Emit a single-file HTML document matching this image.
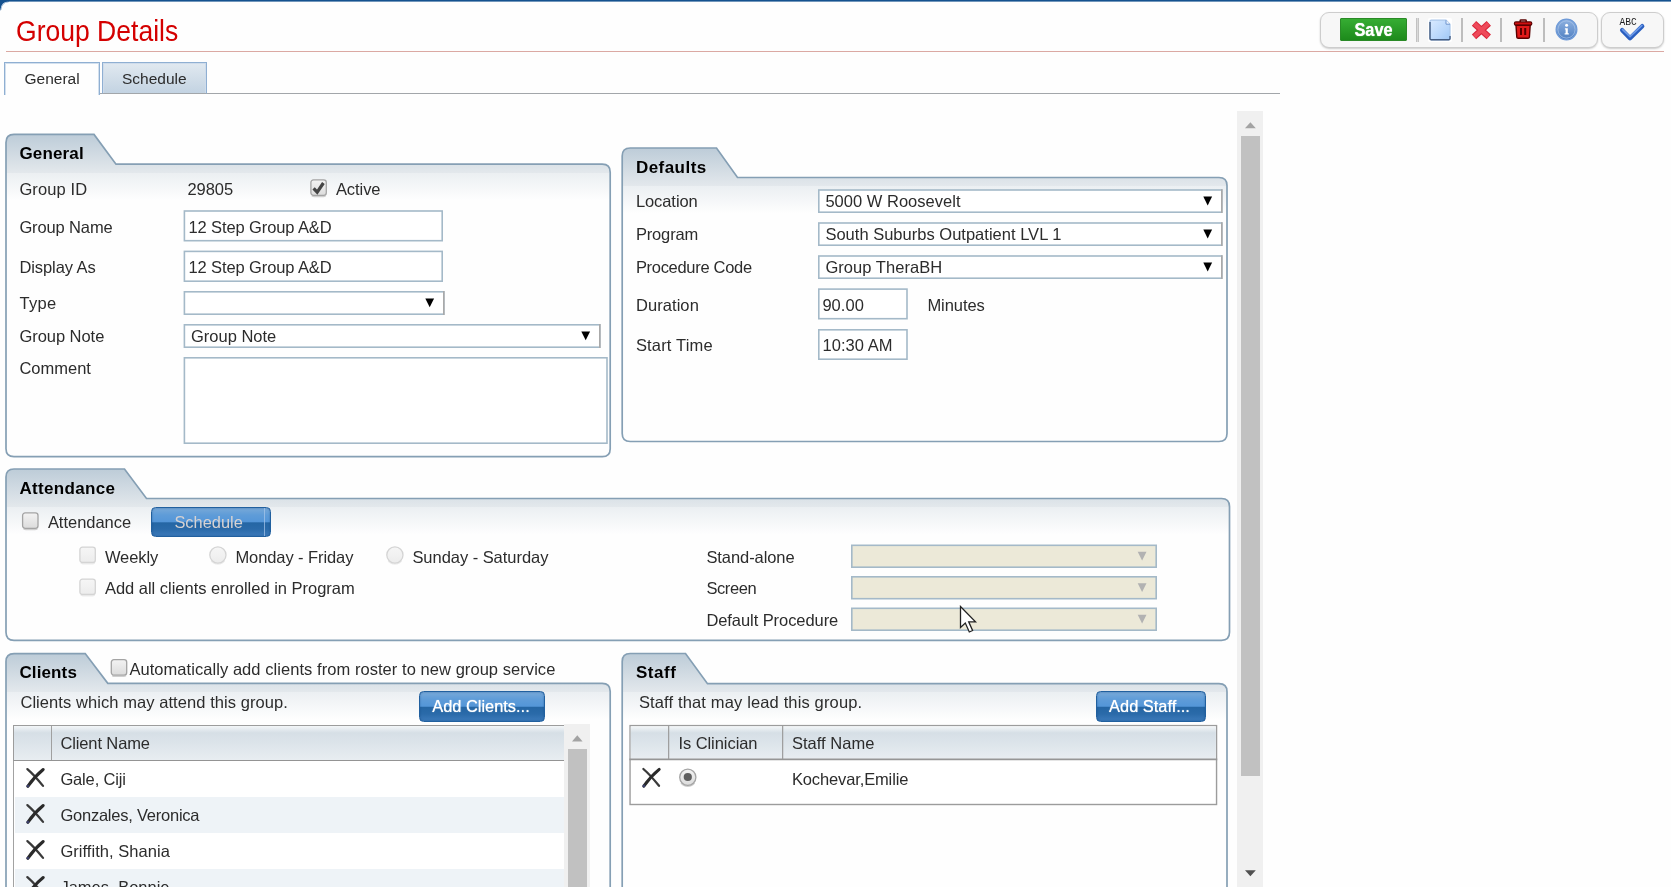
<!DOCTYPE html><html lang="en"><head><meta charset="utf-8"><title>Group Details</title><style>
*{box-sizing:border-box;margin:0;padding:0}
html,body{width:1671px;height:887px;overflow:hidden;background:#fefefe}
#root{position:absolute;left:0;top:0;width:1671px;height:887px;overflow:hidden;will-change:transform}
body{font-family:"Liberation Sans",sans-serif;font-size:16.5px;color:#2c2c2c;position:relative}
.abs{position:absolute}
.t{position:absolute;white-space:nowrap;line-height:20px;height:20px}
.b{font-weight:bold;font-size:17px;color:#000}
.inp{position:absolute;background:#fff;border:2px solid #a9bccb;border-top-color:#9fb3c3;}
.sel{position:absolute;background:#fff;border:2px solid #a9bccb}
.arr{position:absolute;width:0;height:0;border-left:5px solid transparent;border-right:5px solid transparent;border-top:9px solid #111}
.dis{background:#ece9d8}
.cb{position:absolute;width:18px;height:18px;border:1px solid #a5a5a5;border-radius:3px;background:linear-gradient(#f6f6f6,#dedede);box-shadow:0 1px 1px rgba(0,0,0,.15)}
.rb{position:absolute;width:18px;height:18px;border:1px solid #a5a5a5;border-radius:50%;background:linear-gradient(#f6f6f6,#dedede);box-shadow:0 1px 1px rgba(0,0,0,.15)}
.btn{position:absolute;border-radius:4.5px;border:1.3px solid #21609f;background:linear-gradient(#78a9d8 0%,#5f9cd8 25%,#5496d8 49%,#2566a4 53%,#2a6aa9 75%,#3c7aba 100%);color:#fff;text-align:center;font-size:16.4px;box-shadow:inset 0 0 2px rgba(20,70,130,.6)}
</style></head><body><div id="root">
<svg class="abs" style="left:0;top:0" width="1671" height="12" viewBox="0 0 1671 12"><rect x="0" y="0" width="1671" height="1.6" fill="#15528f"/><path d="M0 0 H9 V1.6 Q1.2 1.8 0.6 9.5 L0 11 Z" fill="#15528f"/><path d="M8.5 1.9 Q1.6 2.2 0.9 10" fill="none" stroke="#7fa3c8" stroke-width="1" opacity=".7"/></svg>
<div class="t" style="left:16.2px;top:14px;font-size:28.6px;transform:scaleX(0.928);transform-origin:0 0;line-height:34px;height:34px;color:#d40000">Group Details</div>
<div class="abs" style="left:6px;top:51px;width:1658px;height:1px;background:#dba9a3"></div>
<div class="abs" style="left:100px;top:93px;width:1180px;height:1px;background:#a2a6aa"></div>
<div class="abs" style="left:4px;top:61.5px;width:96.4px;height:33px;border:1.4px solid #8fafd2;border-bottom:none;background:#fefefe;box-shadow:inset 1px 1px 0 #d3e0ee,inset -1px 0 0 #d3e0ee"></div>
<div class="t" style="left:24.5px;top:68.5px;font-size:15.5px">General</div>
<div class="abs" style="left:102px;top:61.5px;width:105px;height:32.5px;border:1.4px solid #8fafd2;border-bottom-color:#a2a6aa;background:linear-gradient(#e1e9f0,#c3d3e2);box-shadow:inset 1px 1px 0 #cfdceb,inset -1px 0 0 #cfdceb"></div>
<div class="t" style="left:122px;top:68.5px;font-size:15.5px">Schedule</div>
<svg class="abs" style="left:0;top:0" width="1290" height="887" viewBox="0 0 1290 887">
<defs><linearGradient id="ggen" gradientUnits="userSpaceOnUse" x1="0" y1="134.4" x2="0" y2="200.2">
<stop offset="0" stop-color="#bdccd8"/><stop offset="0.581" stop-color="#e3e8ec"/><stop offset="0.581" stop-color="#ebeff2"/><stop offset="1" stop-color="#fefefe"/></linearGradient></defs>
<path d="M6,448.7 L6,142.4 Q6,134.4 14,134.4 L94,134.4 L116,164.2 L602.2,164.2 Q610.2,164.2 610.2,172.2 L610.2,448.7 Q610.2,456.7 602.2,456.7 L14,456.7 Q6,456.7 6,448.7 Z" fill="url(#ggen)" stroke="#859fb4" stroke-width="1.7"/></svg>
<svg class="abs" style="left:0;top:0" width="1290" height="887" viewBox="0 0 1290 887">
<defs><linearGradient id="gdef" gradientUnits="userSpaceOnUse" x1="0" y1="148" x2="0" y2="213.5">
<stop offset="0" stop-color="#bdccd8"/><stop offset="0.579" stop-color="#e3e8ec"/><stop offset="0.579" stop-color="#ebeff2"/><stop offset="1" stop-color="#fefefe"/></linearGradient></defs>
<path d="M622.2,433.5 L622.2,156 Q622.2,148 630.2,148 L716.5,148 L737.5,177.5 L1219,177.5 Q1227,177.5 1227,185.5 L1227,433.5 Q1227,441.5 1219,441.5 L630.2,441.5 Q622.2,441.5 622.2,433.5 Z" fill="url(#gdef)" stroke="#859fb4" stroke-width="1.7"/></svg>
<svg class="abs" style="left:0;top:0" width="1290" height="887" viewBox="0 0 1290 887">
<defs><linearGradient id="gatt" gradientUnits="userSpaceOnUse" x1="0" y1="469" x2="0" y2="534.5">
<stop offset="0" stop-color="#bdccd8"/><stop offset="0.579" stop-color="#e3e8ec"/><stop offset="0.579" stop-color="#ebeff2"/><stop offset="1" stop-color="#fefefe"/></linearGradient></defs>
<path d="M6,632.3 L6,477 Q6,469 14,469 L124.5,469 L146.5,498.5 L1221.5,498.5 Q1229.5,498.5 1229.5,506.5 L1229.5,632.3 Q1229.5,640.3 1221.5,640.3 L14,640.3 Q6,640.3 6,632.3 Z" fill="url(#gatt)" stroke="#859fb4" stroke-width="1.7"/></svg>
<svg class="abs" style="left:0;top:0" width="1290" height="887" viewBox="0 0 1290 887">
<defs><linearGradient id="gcli" gradientUnits="userSpaceOnUse" x1="0" y1="653.6" x2="0" y2="719.3">
<stop offset="0" stop-color="#bdccd8"/><stop offset="0.580" stop-color="#e3e8ec"/><stop offset="0.580" stop-color="#ebeff2"/><stop offset="1" stop-color="#fefefe"/></linearGradient></defs>
<path d="M6,892 L6,661.6 Q6,653.6 14,653.6 L85.2,653.6 L107.8,683.3 L602.2,683.3 Q610.2,683.3 610.2,691.3 L610.2,892 Q610.2,900 602.2,900 L14,900 Q6,900 6,892 Z" fill="url(#gcli)" stroke="#859fb4" stroke-width="1.7"/></svg>
<svg class="abs" style="left:0;top:0" width="1290" height="887" viewBox="0 0 1290 887">
<defs><linearGradient id="gstf" gradientUnits="userSpaceOnUse" x1="0" y1="653.5" x2="0" y2="719.7">
<stop offset="0" stop-color="#bdccd8"/><stop offset="0.583" stop-color="#e3e8ec"/><stop offset="0.583" stop-color="#ebeff2"/><stop offset="1" stop-color="#fefefe"/></linearGradient></defs>
<path d="M622.2,892 L622.2,661.5 Q622.2,653.5 630.2,653.5 L685.5,653.5 L707.5,683.7 L1219,683.7 Q1227,683.7 1227,691.7 L1227,892 Q1227,900 1219,900 L630.2,900 Q622.2,900 622.2,892 Z" fill="url(#gstf)" stroke="#859fb4" stroke-width="1.7"/></svg>
<svg width="0" height="0" style="position:absolute"><defs><linearGradient id="cbg" x1="0" y1="0" x2="0" y2="1"><stop offset="0" stop-color="#f3f3f3"/><stop offset="1" stop-color="#dcdcdc"/></linearGradient><linearGradient id="cbf" x1="0" y1="0" x2="0" y2="1"><stop offset="0" stop-color="#f6f6f6"/><stop offset="1" stop-color="#ececec"/></linearGradient></defs></svg>
<div class="t b" style="left:19.4px;top:144px;letter-spacing:0.155px;">General</div>
<div class="t " style="left:19.4px;top:179px;letter-spacing:0.106px;">Group ID</div>
<div class="t " style="left:187.4px;top:179px;letter-spacing:-0.018px;">29805</div>
<svg class="abs" style="left:310px;top:179px" width="20" height="21" viewBox="0 0 20 21"><g transform="translate(0.2,0.2)"><path d="M1.5 16.6 Q3 17.4 4 17.4 H13 Q14.5 17.4 15.5 16.6" fill="none" stroke="#cfcfcf" stroke-width="1.3"/><rect x="0.7" y="0.7" width="15.4" height="15.4" rx="2.6" fill="url(#cbg)" stroke="#a4a4a4" stroke-width="1.3"/><path d="M3.4 9.2 L7 13 L13.2 3.8" fill="none" stroke="#454545" stroke-width="3.2"/></g></svg>
<div class="t " style="left:335.9px;top:179px;letter-spacing:-0.056px;">Active</div>
<div class="t " style="left:19.4px;top:217px;letter-spacing:-0.127px;">Group Name</div>
<svg class="abs" style="left:183px;top:210px" width="261" height="33" viewBox="0 0 261 33"><g transform="translate(0.6,0.2)"><rect x="0.8" y="0.8" width="257.79999999999995" height="29.7" fill="#fff" stroke="#a4b9c8" stroke-width="1.6"/></g></svg>
<div class="t " style="left:188.4px;top:217px;letter-spacing:-0.102px;">12 Step Group A&amp;D</div>
<div class="t " style="left:19.4px;top:257px;letter-spacing:-0.083px;">Display As</div>
<svg class="abs" style="left:183px;top:250px" width="261" height="33" viewBox="0 0 261 33"><g transform="translate(0.6,0.6)"><rect x="0.8" y="0.8" width="257.79999999999995" height="29.799999999999997" fill="#fff" stroke="#a4b9c8" stroke-width="1.6"/></g></svg>
<div class="t " style="left:188.4px;top:257px;letter-spacing:-0.102px;">12 Step Group A&amp;D</div>
<div class="t " style="left:19.4px;top:293px;letter-spacing:0.330px;">Type</div>
<svg class="abs" style="left:183px;top:291px" width="263" height="25" viewBox="0 0 263 25"><g transform="translate(0.6,0)"><rect x="0.8" y="0.8" width="259.4" height="22.4" fill="#fff" stroke="#a4b9c8" stroke-width="1.6"/><line x1="260.2" y1="0" x2="260.2" y2="24" stroke="#a9a9a9" stroke-width="1.6"/></g></svg>
<svg class="abs" style="left:425px;top:298px" width="12" height="12" viewBox="0 0 12 12"><g transform="translate(0.3,0.1)"><path d="M0 0.3 H8.8 L4.4 9.2 Z" fill="#000"/></g></svg>
<div class="t " style="left:19.4px;top:326px;letter-spacing:-0.040px;">Group Note</div>
<svg class="abs" style="left:183px;top:324px" width="419" height="25" viewBox="0 0 419 25"><g transform="translate(0.6,0)"><rect x="0.8" y="0.8" width="415.4" height="22.4" fill="#fff" stroke="#a4b9c8" stroke-width="1.6"/><line x1="416.2" y1="0" x2="416.2" y2="24" stroke="#a9a9a9" stroke-width="1.6"/></g></svg>
<svg class="abs" style="left:581px;top:331px" width="12" height="12" viewBox="0 0 12 12"><g transform="translate(0.3,0.1)"><path d="M0 0.3 H8.8 L4.4 9.2 Z" fill="#000"/></g></svg>
<div class="t " style="left:191.0px;top:326px;">Group Note</div>
<div class="t " style="left:19.4px;top:358px;letter-spacing:-0.004px;">Comment</div>
<svg class="abs" style="left:183px;top:357px" width="426" height="88" viewBox="0 0 426 88"><g transform="translate(0.6,0)"><rect x="0.8" y="0.8" width="422.59999999999997" height="85.4" fill="#fff" stroke="#a4b9c8" stroke-width="1.6"/></g></svg>
<div class="t b" style="left:635.9px;top:158px;letter-spacing:0.465px;">Defaults</div>
<div class="t " style="left:635.9px;top:191px;letter-spacing:-0.074px;">Location</div>
<svg class="abs" style="left:818px;top:189px" width="406" height="25" viewBox="0 0 406 25"><g transform="translate(0,0.2)"><rect x="0.8" y="0.8" width="403.0" height="22.2" fill="#fff" stroke="#a4b9c8" stroke-width="1.6"/><line x1="403.8" y1="0" x2="403.8" y2="23.8" stroke="#a9a9a9" stroke-width="1.6"/></g></svg>
<svg class="abs" style="left:1203px;top:196px" width="12" height="12" viewBox="0 0 12 12"><g transform="translate(0.3,0.2)"><path d="M0 0.3 H8.8 L4.4 9.2 Z" fill="#000"/></g></svg>
<div class="t " style="left:825.4px;top:191px;letter-spacing:0.017px;">5000 W Roosevelt</div>
<div class="t " style="left:635.9px;top:224px;letter-spacing:-0.154px;">Program</div>
<svg class="abs" style="left:818px;top:222px" width="406" height="25" viewBox="0 0 406 25"><g transform="translate(0,0.2)"><rect x="0.8" y="0.8" width="403.0" height="22.2" fill="#fff" stroke="#a4b9c8" stroke-width="1.6"/><line x1="403.8" y1="0" x2="403.8" y2="23.8" stroke="#a9a9a9" stroke-width="1.6"/></g></svg>
<svg class="abs" style="left:1203px;top:229px" width="12" height="12" viewBox="0 0 12 12"><g transform="translate(0.3,0.2)"><path d="M0 0.3 H8.8 L4.4 9.2 Z" fill="#000"/></g></svg>
<div class="t " style="left:825.4px;top:224px;letter-spacing:0.012px;">South Suburbs Outpatient LVL 1</div>
<div class="t " style="left:635.9px;top:257px;letter-spacing:-0.305px;">Procedure Code</div>
<svg class="abs" style="left:818px;top:255px" width="406" height="25" viewBox="0 0 406 25"><g transform="translate(0,0.2)"><rect x="0.8" y="0.8" width="403.0" height="22.2" fill="#fff" stroke="#a4b9c8" stroke-width="1.6"/><line x1="403.8" y1="0" x2="403.8" y2="23.8" stroke="#a9a9a9" stroke-width="1.6"/></g></svg>
<svg class="abs" style="left:1203px;top:262px" width="12" height="12" viewBox="0 0 12 12"><g transform="translate(0.3,0.2)"><path d="M0 0.3 H8.8 L4.4 9.2 Z" fill="#000"/></g></svg>
<div class="t " style="left:825.4px;top:257px;letter-spacing:0.048px;">Group TheraBH</div>
<div class="t " style="left:635.9px;top:295px;letter-spacing:0.078px;">Duration</div>
<svg class="abs" style="left:818px;top:288px" width="91" height="33" viewBox="0 0 91 33"><g transform="translate(0,0.3)"><rect x="0.8" y="0.8" width="88.2" height="29.599999999999998" fill="#fff" stroke="#a4b9c8" stroke-width="1.6"/></g></svg>
<div class="t " style="left:822.4px;top:295px;letter-spacing:0.041px;">90.00</div>
<div class="t " style="left:927.4px;top:295px;letter-spacing:-0.069px;">Minutes</div>
<div class="t " style="left:635.9px;top:335px;letter-spacing:0.171px;">Start Time</div>
<svg class="abs" style="left:818px;top:329px" width="91" height="32" viewBox="0 0 91 32"><g transform="translate(0,0)"><rect x="0.8" y="0.8" width="88.2" height="29.4" fill="#fff" stroke="#a4b9c8" stroke-width="1.6"/></g></svg>
<div class="t " style="left:822.4px;top:335px;letter-spacing:0.073px;">10:30 AM</div>
<div class="t b" style="left:19.4px;top:479px;letter-spacing:0.322px;">Attendance</div>
<svg class="abs" style="left:21px;top:512px" width="20" height="21" viewBox="0 0 20 21"><g transform="translate(0.9,0.2)"><path d="M1.5 16.6 Q3 17.4 4 17.4 H13 Q14.5 17.4 15.5 16.6" fill="none" stroke="#cfcfcf" stroke-width="1.3"/><rect x="0.7" y="0.7" width="15.4" height="15.4" rx="2.6" fill="url(#cbg)" stroke="#a4a4a4" stroke-width="1.3"/></g></svg>
<div class="t " style="left:47.9px;top:512px;letter-spacing:-0.028px;">Attendance</div>
<div class="btn" style="left:150.6px;top:506.7px;width:120px;height:30.3px;line-height:28px;color:#d6d2d2;padding-right:4px">Schedule</div><div class="abs" style="left:264px;top:508px;width:1px;height:28px;background:rgba(170,200,235,.7)"></div>
<svg class="abs" style="left:79px;top:546px" width="20" height="21" viewBox="0 0 20 21"><g transform="translate(0.2,0.4)"><path d="M1.5 16.6 Q3 17.4 4 17.4 H13 Q14.5 17.4 15.5 16.6" fill="none" stroke="#ececec" stroke-width="1.3"/><rect x="0.7" y="0.7" width="15.4" height="15.4" rx="2.6" fill="url(#cbf)" stroke="#d4d4d4" stroke-width="1.3"/></g></svg>
<div class="t " style="left:104.9px;top:547px;letter-spacing:-0.083px;">Weekly</div>
<svg class="abs" style="left:209px;top:546px" width="20" height="22" viewBox="0 0 20 22"><g transform="translate(0,0.1)"><path d="M2.2 13.5 A8.2 8.2 0 0 0 15.6 13.5" fill="none" stroke="#ececec" stroke-width="1.5" transform="translate(0,1)"/><circle cx="8.9" cy="8.9" r="8.1" fill="url(#cbf)" stroke="#d4d4d4" stroke-width="1.3"/></g></svg>
<div class="t " style="left:235.4px;top:547px;letter-spacing:-0.081px;">Monday - Friday</div>
<svg class="abs" style="left:386px;top:546px" width="20" height="22" viewBox="0 0 20 22"><g transform="translate(0,0.1)"><path d="M2.2 13.5 A8.2 8.2 0 0 0 15.6 13.5" fill="none" stroke="#ececec" stroke-width="1.5" transform="translate(0,1)"/><circle cx="8.9" cy="8.9" r="8.1" fill="url(#cbf)" stroke="#d4d4d4" stroke-width="1.3"/></g></svg>
<div class="t " style="left:412.4px;top:547px;letter-spacing:-0.040px;">Sunday - Saturday</div>
<svg class="abs" style="left:79px;top:578px" width="20" height="21" viewBox="0 0 20 21"><g transform="translate(0.2,0.4)"><path d="M1.5 16.6 Q3 17.4 4 17.4 H13 Q14.5 17.4 15.5 16.6" fill="none" stroke="#ececec" stroke-width="1.3"/><rect x="0.7" y="0.7" width="15.4" height="15.4" rx="2.6" fill="url(#cbf)" stroke="#d4d4d4" stroke-width="1.3"/></g></svg>
<div class="t " style="left:104.9px;top:578px;letter-spacing:-0.017px;">Add all clients enrolled in Program</div>
<div class="t " style="left:706.4px;top:547px;letter-spacing:-0.073px;">Stand-alone</div>
<svg class="abs" style="left:851px;top:544px" width="307" height="25" viewBox="0 0 307 25"><g transform="translate(0,0.5)"><rect x="0.8" y="0.8" width="304.4" height="21.9" fill="#ece9d8" stroke="#a4b9c8" stroke-width="1.6"/></g></svg>
<svg class="abs" style="left:1137px;top:551px" width="12" height="12" viewBox="0 0 12 12"><g transform="translate(0.7,0.35)"><path d="M0 0.3 H8.8 L4.4 9.2 Z" fill="#b2b2b2"/></g></svg>
<div class="t " style="left:706.4px;top:578px;letter-spacing:-0.397px;">Screen</div>
<svg class="abs" style="left:851px;top:576px" width="307" height="25" viewBox="0 0 307 25"><g transform="translate(0,0)"><rect x="0.8" y="0.8" width="304.4" height="21.9" fill="#ece9d8" stroke="#a4b9c8" stroke-width="1.6"/></g></svg>
<svg class="abs" style="left:1137px;top:582px" width="12" height="12" viewBox="0 0 12 12"><g transform="translate(0.7,0.85)"><path d="M0 0.3 H8.8 L4.4 9.2 Z" fill="#b2b2b2"/></g></svg>
<div class="t " style="left:706.4px;top:610px;letter-spacing:-0.071px;">Default Procedure</div>
<svg class="abs" style="left:851px;top:607px" width="307" height="25" viewBox="0 0 307 25"><g transform="translate(0,0.5)"><rect x="0.8" y="0.8" width="304.4" height="21.9" fill="#ece9d8" stroke="#a4b9c8" stroke-width="1.6"/></g></svg>
<svg class="abs" style="left:1137px;top:614px" width="12" height="12" viewBox="0 0 12 12"><g transform="translate(0.7,0.35)"><path d="M0 0.3 H8.8 L4.4 9.2 Z" fill="#b2b2b2"/></g></svg>
<div class="t b" style="left:19.4px;top:663px;letter-spacing:0.130px;">Clients</div>
<svg class="abs" style="left:110px;top:659px" width="20" height="20" viewBox="0 0 20 20"><g transform="translate(0.6,0.0)"><path d="M1.5 16.6 Q3 17.4 4 17.4 H13 Q14.5 17.4 15.5 16.6" fill="none" stroke="#cfcfcf" stroke-width="1.3"/><rect x="0.7" y="0.7" width="15.4" height="15.4" rx="2.6" fill="url(#cbg)" stroke="#a4a4a4" stroke-width="1.3"/></g></svg>
<div class="t " style="left:129.4px;top:659px;letter-spacing:0.056px;">Automatically add clients from roster to new group service</div>
<div class="t " style="left:20.4px;top:692px;letter-spacing:0.070px;">Clients which may attend this group.</div>
<div class="btn" style="left:419px;top:691.1px;width:126px;height:30.5px;line-height:29px;text-shadow:0 0 1px #fff;padding-right:2px">Add Clients...</div>
<div class="abs" style="left:13px;top:725px;width:551.5px;height:162px;background:#fff;border-left:1.6px solid #a2a2a2"></div>
<div class="abs" style="left:14.5px;top:761px;width:549.5px;height:36px;background:#fff"></div>
<svg class="abs" style="left:24px;top:767px" width="23" height="23" viewBox="0 0 23 23"><g transform="translate(0.6,0.3)"><path d="M2.8 1.8 Q9.5 7.6 18.4 18.6" fill="none" stroke="#3a3a3a" stroke-width="2.3" stroke-linecap="round"/><path d="M18.6 2.2 Q10 9.2 3.2 19" fill="none" stroke="#2a2a2a" stroke-width="3" stroke-linecap="round"/><circle cx="3.3" cy="18.8" r="1.4" fill="#3a3f6a"/></g></svg>
<div class="t " style="left:60.4px;top:769px;letter-spacing:-0.154px;">Gale, Ciji</div>
<div class="abs" style="left:14.5px;top:797px;width:549.5px;height:36px;background:#eef3f7"></div>
<svg class="abs" style="left:24px;top:803px" width="23" height="23" viewBox="0 0 23 23"><g transform="translate(0.6,0.3)"><path d="M2.8 1.8 Q9.5 7.6 18.4 18.6" fill="none" stroke="#3a3a3a" stroke-width="2.3" stroke-linecap="round"/><path d="M18.6 2.2 Q10 9.2 3.2 19" fill="none" stroke="#2a2a2a" stroke-width="3" stroke-linecap="round"/><circle cx="3.3" cy="18.8" r="1.4" fill="#3a3f6a"/></g></svg>
<div class="t " style="left:60.4px;top:805px;letter-spacing:-0.233px;">Gonzales, Veronica</div>
<div class="abs" style="left:14.5px;top:833px;width:549.5px;height:36px;background:#fff"></div>
<svg class="abs" style="left:24px;top:839px" width="23" height="23" viewBox="0 0 23 23"><g transform="translate(0.6,0.3)"><path d="M2.8 1.8 Q9.5 7.6 18.4 18.6" fill="none" stroke="#3a3a3a" stroke-width="2.3" stroke-linecap="round"/><path d="M18.6 2.2 Q10 9.2 3.2 19" fill="none" stroke="#2a2a2a" stroke-width="3" stroke-linecap="round"/><circle cx="3.3" cy="18.8" r="1.4" fill="#3a3f6a"/></g></svg>
<div class="t " style="left:60.4px;top:841px;letter-spacing:0.041px;">Griffith, Shania</div>
<div class="abs" style="left:14.5px;top:869px;width:549.5px;height:36px;background:#eef3f7"></div>
<svg class="abs" style="left:24px;top:875px" width="23" height="23" viewBox="0 0 23 23"><g transform="translate(0.6,0.3)"><path d="M2.8 1.8 Q9.5 7.6 18.4 18.6" fill="none" stroke="#3a3a3a" stroke-width="2.3" stroke-linecap="round"/><path d="M18.6 2.2 Q10 9.2 3.2 19" fill="none" stroke="#2a2a2a" stroke-width="3" stroke-linecap="round"/><circle cx="3.3" cy="18.8" r="1.4" fill="#3a3f6a"/></g></svg>
<div class="t " style="left:60.4px;top:877px;">James, Bonnie</div>
<div class="abs" style="left:13px;top:724.8px;width:551px;height:36.2px;background:linear-gradient(#f3f6f8 0%,#d6dfe6 20%,#dce4ea 50%,#e8edf1 100%);border:1.4px solid #9c9c9c;border-right:none;border-bottom:1.6px solid #949494"></div>
<div class="abs" style="left:50.8px;top:726px;width:1.2px;height:34px;background:#a0a0a0"></div>
<div class="t " style="left:60.4px;top:733px;letter-spacing:-0.118px;">Client Name</div>
<div class="abs" style="left:564.2px;top:724px;width:25.7px;height:163px;background:#f0f0f0"></div>
<div class="abs" style="left:567.5px;top:749px;width:19.9px;height:140px;background:#c1c1c1"></div>
<svg class="abs" style="left:572px;top:735px" width="11" height="7" viewBox="0 0 11 7"><path d="M0 6.5 L5.3 0.2 L10.6 6.5 Z" fill="#a3a3a3"/></svg>
<div class="t b" style="left:635.9px;top:663px;letter-spacing:0.584px;">Staff</div>
<div class="t " style="left:638.9px;top:692px;letter-spacing:0.144px;">Staff that may lead this group.</div>
<div class="btn" style="left:1095.5px;top:691.4px;width:110px;height:30.5px;line-height:29px;text-shadow:0 0 1px #fff;padding-right:2px">Add Staff...</div>
<svg class="abs" style="left:620px;top:715px" width="610" height="100" viewBox="620 715 610 100">
<defs><linearGradient id="hg" x1="0" y1="0" x2="0" y2="1"><stop offset="0" stop-color="#f3f6f8"/><stop offset="0.2" stop-color="#d6dfe6"/><stop offset="0.5" stop-color="#dce4ea"/><stop offset="1" stop-color="#e8edf1"/></linearGradient></defs>
<rect x="630.05" y="725.6" width="586.5" height="78.9" fill="#fff" stroke="#9c9c9c" stroke-width="1.4"/>
<rect x="630.75" y="726.3" width="585.1" height="32.6" fill="url(#hg)"/>
<line x1="629.35" y1="759.4" x2="1217.25" y2="759.4" stroke="#969696" stroke-width="1.6"/>
<line x1="668.65" y1="725" x2="668.65" y2="759" stroke="#9c9c9c" stroke-width="1.2"/>
<line x1="782.65" y1="725" x2="782.65" y2="759" stroke="#9c9c9c" stroke-width="1.2"/>
</svg>
<div class="t " style="left:678.4px;top:733px;letter-spacing:-0.057px;">Is Clinician</div>
<div class="t " style="left:791.9px;top:733px;letter-spacing:0.037px;">Staff Name</div>
<svg class="abs" style="left:640px;top:767px" width="23" height="23" viewBox="0 0 23 23"><g transform="translate(0.6,0.2)"><path d="M2.8 1.8 Q9.5 7.6 18.4 18.6" fill="none" stroke="#3a3a3a" stroke-width="2.3" stroke-linecap="round"/><path d="M18.6 2.2 Q10 9.2 3.2 19" fill="none" stroke="#2a2a2a" stroke-width="3" stroke-linecap="round"/><circle cx="3.3" cy="18.8" r="1.4" fill="#3a3f6a"/></g></svg>
<svg class="abs" style="left:678px;top:768px" width="21" height="22" viewBox="0 0 21 22"><g transform="translate(0.9,0.3)"><path d="M2.2 13.5 A8.2 8.2 0 0 0 15.6 13.5" fill="none" stroke="#cfcfcf" stroke-width="1.5" transform="translate(0,1)"/><circle cx="8.9" cy="8.9" r="8.1" fill="url(#cbg)" stroke="#a4a4a4" stroke-width="1.3"/><circle cx="8.9" cy="8.7" r="4.1" fill="#5e5e5e"/></g></svg>
<div class="t " style="left:791.9px;top:769px;letter-spacing:-0.127px;">Kochevar,Emilie</div>
<div class="abs" style="left:1237.1px;top:111px;width:25.9px;height:776px;background:#f0f0f0"></div>
<div class="abs" style="left:1240.6px;top:136px;width:19.8px;height:639.5px;background:#c1c1c1"></div>
<svg class="abs" style="left:1244.9px;top:121.7px" width="11" height="7" viewBox="0 0 11 7"><path d="M0 6.3 L5.4 0.2 L10.8 6.3 Z" fill="#a3a3a3"/></svg>
<svg class="abs" style="left:1245px;top:869.8px" width="11" height="7" viewBox="0 0 11 7"><path d="M0 0.2 H10.8 L5.4 6.3 Z" fill="#505050"/></svg>
<div class="abs" style="left:1320px;top:12px;width:278px;height:35.5px;border:1px solid #cdcdcd;border-radius:9px;background:#f7f7f7;box-shadow:0 1px 2px rgba(0,0,0,.2)"></div>
<div class="abs" style="left:1601px;top:12px;width:63px;height:35.5px;border:1px solid #cdcdcd;border-radius:9px;background:#f7f7f7;box-shadow:0 1px 2px rgba(0,0,0,.2)"></div>
<div class="abs" style="left:1339.5px;top:18px;width:67.5px;height:22.5px;border:1px solid #2a8a27;border-radius:1px;background:linear-gradient(#36ad33,#1d8a1b);color:#fff;font-weight:bold;font-size:17.6px;line-height:23.5px;text-align:center;text-shadow:0 0 1px #fff"><span style="display:inline-block;transform:scaleX(0.93)">Save</span></div>
<div class="abs" style="left:1416px;top:18px;width:3px;height:24px;background:linear-gradient(90deg,#b5b5b5,#dadada 50%,#b9b9b9)"></div>
<div class="abs" style="left:1461px;top:18px;width:1.6px;height:24px;background:#bdbdbd"></div>
<div class="abs" style="left:1500px;top:18px;width:1.6px;height:24px;background:#bdbdbd"></div>
<div class="abs" style="left:1543.3px;top:18px;width:1.6px;height:24px;background:#bdbdbd"></div>
<svg class="abs" style="left:1428px;top:18px" width="24" height="24" viewBox="0 0 24 24"><defs><linearGradient id="pg" x1="0" y1="0" x2="1" y2="1"><stop offset="0" stop-color="#d9eaff"/><stop offset="0.6" stop-color="#b9d7fb"/><stop offset="1" stop-color="#9fc7f5"/></linearGradient></defs><rect x="0" y="0" width="24" height="24" rx="2" fill="#fff"/><path d="M3.2 2.2 H18 L22 6.2 V20.6 Q22 21.8 20.8 21.8 H3.2 Q2 21.8 2 20.6 V3.4 Q2 2.2 3.2 2.2 Z" fill="url(#pg)" stroke="#a9c6ea" stroke-width="1.2"/><path d="M2 4 V20.6 Q2 21.8 3.2 21.8 H20.8 Q22 21.8 22 20.6 V18" fill="none" stroke="#445c80" stroke-width="1.4"/><path d="M18 2.2 V6.2 H22" fill="#eef5ff" stroke="#6f95cf" stroke-width="1"/></svg>
<svg class="abs" style="left:1471px;top:20px" width="21" height="20" viewBox="0 0 21 20"><path d="M3 3.3 L17.8 16.8 M17.8 3.3 L3 16.8" stroke="#d9263a" stroke-width="6.4" fill="none"/><path d="M3.4 3.6 L17.4 16.5 M17.4 3.6 L3.4 16.5" stroke="#ee4a5a" stroke-width="4.2" fill="none"/></svg>
<svg class="abs" style="left:1512px;top:18px" width="22" height="22" viewBox="0 0 22 22"><path d="M8.2 4.4 V2.6 Q8.2 1.9 9 1.9 H13.4 Q14.2 1.9 14.2 2.6 V4.4" fill="none" stroke="#5a0000" stroke-width="1.5"/><rect x="2.4" y="3.9" width="17.4" height="3.4" rx="1.5" fill="#cf1010" stroke="#5a0000" stroke-width="1.2"/><path d="M4 7.3 H18.2 L17.4 19.2 Q17.3 20.3 16 20.3 H6.2 Q4.9 20.3 4.8 19.2 Z" fill="#e21a1a" stroke="#5a0000" stroke-width="1.4"/><path d="M9 10 V17 M13.2 10 V17" stroke="#5a0000" stroke-width="2" stroke-linecap="butt"/></svg>
<svg class="abs" style="left:1554.5px;top:18.3px" width="23" height="23" viewBox="0 0 23 23"><defs><linearGradient id="ig" x1="0" y1="0" x2="0" y2="1"><stop offset="0" stop-color="#8fb2e0"/><stop offset="1" stop-color="#4f7fc2"/></linearGradient></defs><circle cx="11.5" cy="11.5" r="10.4" fill="url(#ig)" stroke="#6e9ad8" stroke-width="1.2"/><circle cx="11.5" cy="11.5" r="8.6" fill="none" stroke="#a9c4ea" stroke-width="0.9" opacity=".8"/><circle cx="11.6" cy="7.3" r="1.5" fill="#fff"/><path d="M9.9 10.2 H12.8 V15.2 H13.8 V16.6 H9.6 V15.2 H10.6 V11.5 H9.9 Z" fill="#fff"/></svg>
<div class="abs" style="left:1619.6px;top:15.4px;font-family:'Liberation Mono',monospace;font-size:9.6px;line-height:12px;color:#1e1e1e;transform:scaleY(1.22);transform-origin:0 0">ABC</div>
<svg class="abs" style="left:1618px;top:22px" width="28" height="20" viewBox="0 0 28 20"><path d="M4.2 8.2 L12 16.2 L24.2 4.2" fill="none" stroke="#2a5fc0" stroke-width="4.4" stroke-linejoin="round" stroke-linecap="round"/><path d="M4.4 7.4 L12 14.6 L24 3.4" fill="none" stroke="#6f9be8" stroke-width="1.5" stroke-linecap="round" stroke-linejoin="round"/></svg>
<svg class="abs" style="left:959px;top:605px" width="20" height="30" viewBox="0 0 20 30"><path d="M1.5 1.5 L1.5 22.5 L6.3 18 L10.3 27 L13.6 25.5 L9.7 16.8 L16.5 16.8 Z" fill="#fff" stroke="#222" stroke-width="1.3" stroke-linejoin="miter"/></svg>
</div></body></html>
